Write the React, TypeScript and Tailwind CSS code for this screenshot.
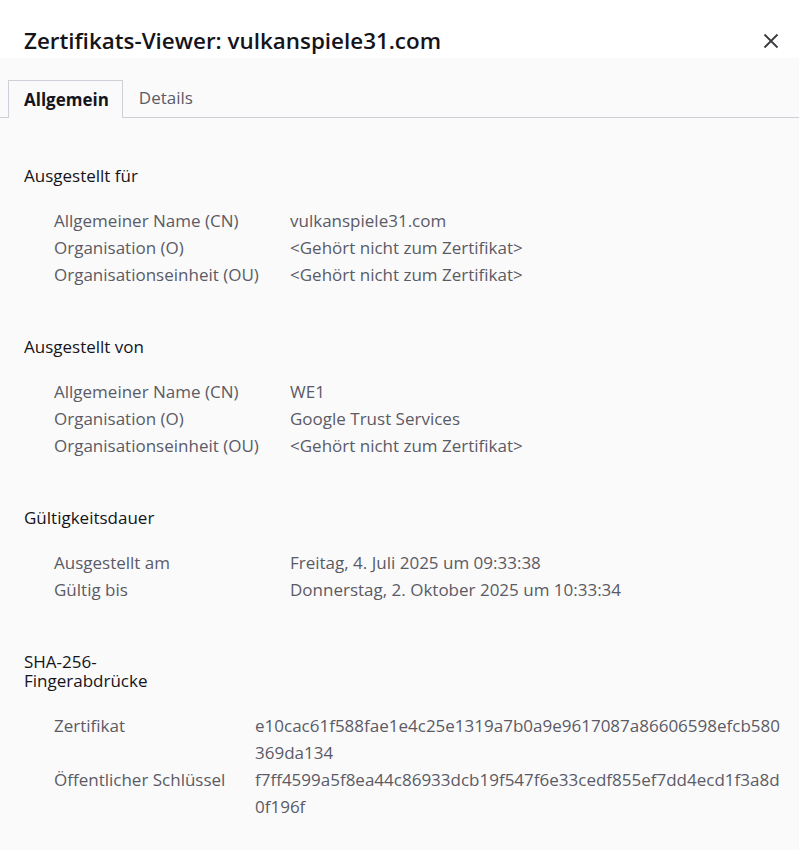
import React from "react";

const font = { fontFamily: '"Open Sans", "Noto Sans", sans-serif' };

function Row({ label, value, labelW }: { label: string; value: React.ReactNode; labelW: string }) {
  return (
    <div className="flex">
      <div className={labelW + " shrink-0"}>{label}</div>
      <div>{value}</div>
    </div>
  );
}

function Section({ title, children, first }: { title: React.ReactNode; children: React.ReactNode; first?: boolean }) {
  return (
    <section className={first ? "" : "mt-[49px]"}>
      <div className="text-[#15141a] text-[17px] leading-[19px]">{title}</div>
      <div className="mt-[22px] ml-[30px] text-[#5b5b66] text-[17px] leading-[27px]">{children}</div>
    </section>
  );
}

export default function App() {
  const w1 = "w-[236px]";
  const w2 = "w-[201px]";
  return (
    <div className="w-[799px] h-[850px] bg-[#fafafa] overflow-hidden" style={font}>
      <header className="h-[58px] bg-white flex items-start justify-between pl-6 pr-[20px] pt-[26px]">
        <h1 className="text-[22.4px] leading-[30px] font-semibold text-[#15141a]">
          Zertifikats-Viewer: vulkanspiele31.com
        </h1>
        <svg width="16" height="16" viewBox="0 0 16 16" className="mt-[7px]">
          <path d="M1.5 1.5 L14.5 14.5 M14.5 1.5 L1.5 14.5" stroke="#3a3a3f" strokeWidth="1.8" />
        </svg>
      </header>
      <div className="h-[60px] border-b border-[#cfcfd8] flex items-end pl-2">
        <div className="h-[38px] -mb-px border border-b-0 border-[#cfcfd8] bg-[#fafafa] pl-[15px] pr-[13px] flex items-center text-[17px] font-bold text-[#15141a]">
          Allgemein
        </div>
        <div className="h-[38px] pl-[16px] pr-4 flex items-center text-[17px] text-[#5b5b66]">Details</div>
      </div>
      <main className="pl-6 pt-[48px]">
        <Section title="Ausgestellt für" first>
          <Row labelW={w1} label="Allgemeiner Name (CN)" value="vulkanspiele31.com" />
          <Row labelW={w1} label="Organisation (O)" value="<Gehört nicht zum Zertifikat>" />
          <Row labelW={w1} label="Organisationseinheit (OU)" value="<Gehört nicht zum Zertifikat>" />
        </Section>
        <Section title="Ausgestellt von">
          <Row labelW={w1} label="Allgemeiner Name (CN)" value="WE1" />
          <Row labelW={w1} label="Organisation (O)" value="Google Trust Services" />
          <Row labelW={w1} label="Organisationseinheit (OU)" value="<Gehört nicht zum Zertifikat>" />
        </Section>
        <Section title="Gültigkeitsdauer">
          <Row labelW={w1} label="Ausgestellt am" value="Freitag, 4. Juli 2025 um 09:33:38" />
          <Row labelW={w1} label="Gültig bis" value="Donnerstag, 2. Oktober 2025 um 10:33:34" />
        </Section>
        <Section
          title={
            <>
              SHA-256-
              <br />
              Fingerabdrücke
            </>
          }
        >
          <Row
            labelW={w2}
            label="Zertifikat"
            value={
              <>
                <div>e10cac61f588fae1e4c25e1319a7b0a9e9617087a86606598efcb580</div>
                <div>369da134</div>
              </>
            }
          />
          <Row
            labelW={w2}
            label="Öffentlicher Schlüssel"
            value={
              <>
                <div>f7ff4599a5f8ea44c86933dcb19f547f6e33cedf855ef7dd4ecd1f3a8d</div>
                <div>0f196f</div>
              </>
            }
          />
        </Section>
      </main>
    </div>
  );
}
